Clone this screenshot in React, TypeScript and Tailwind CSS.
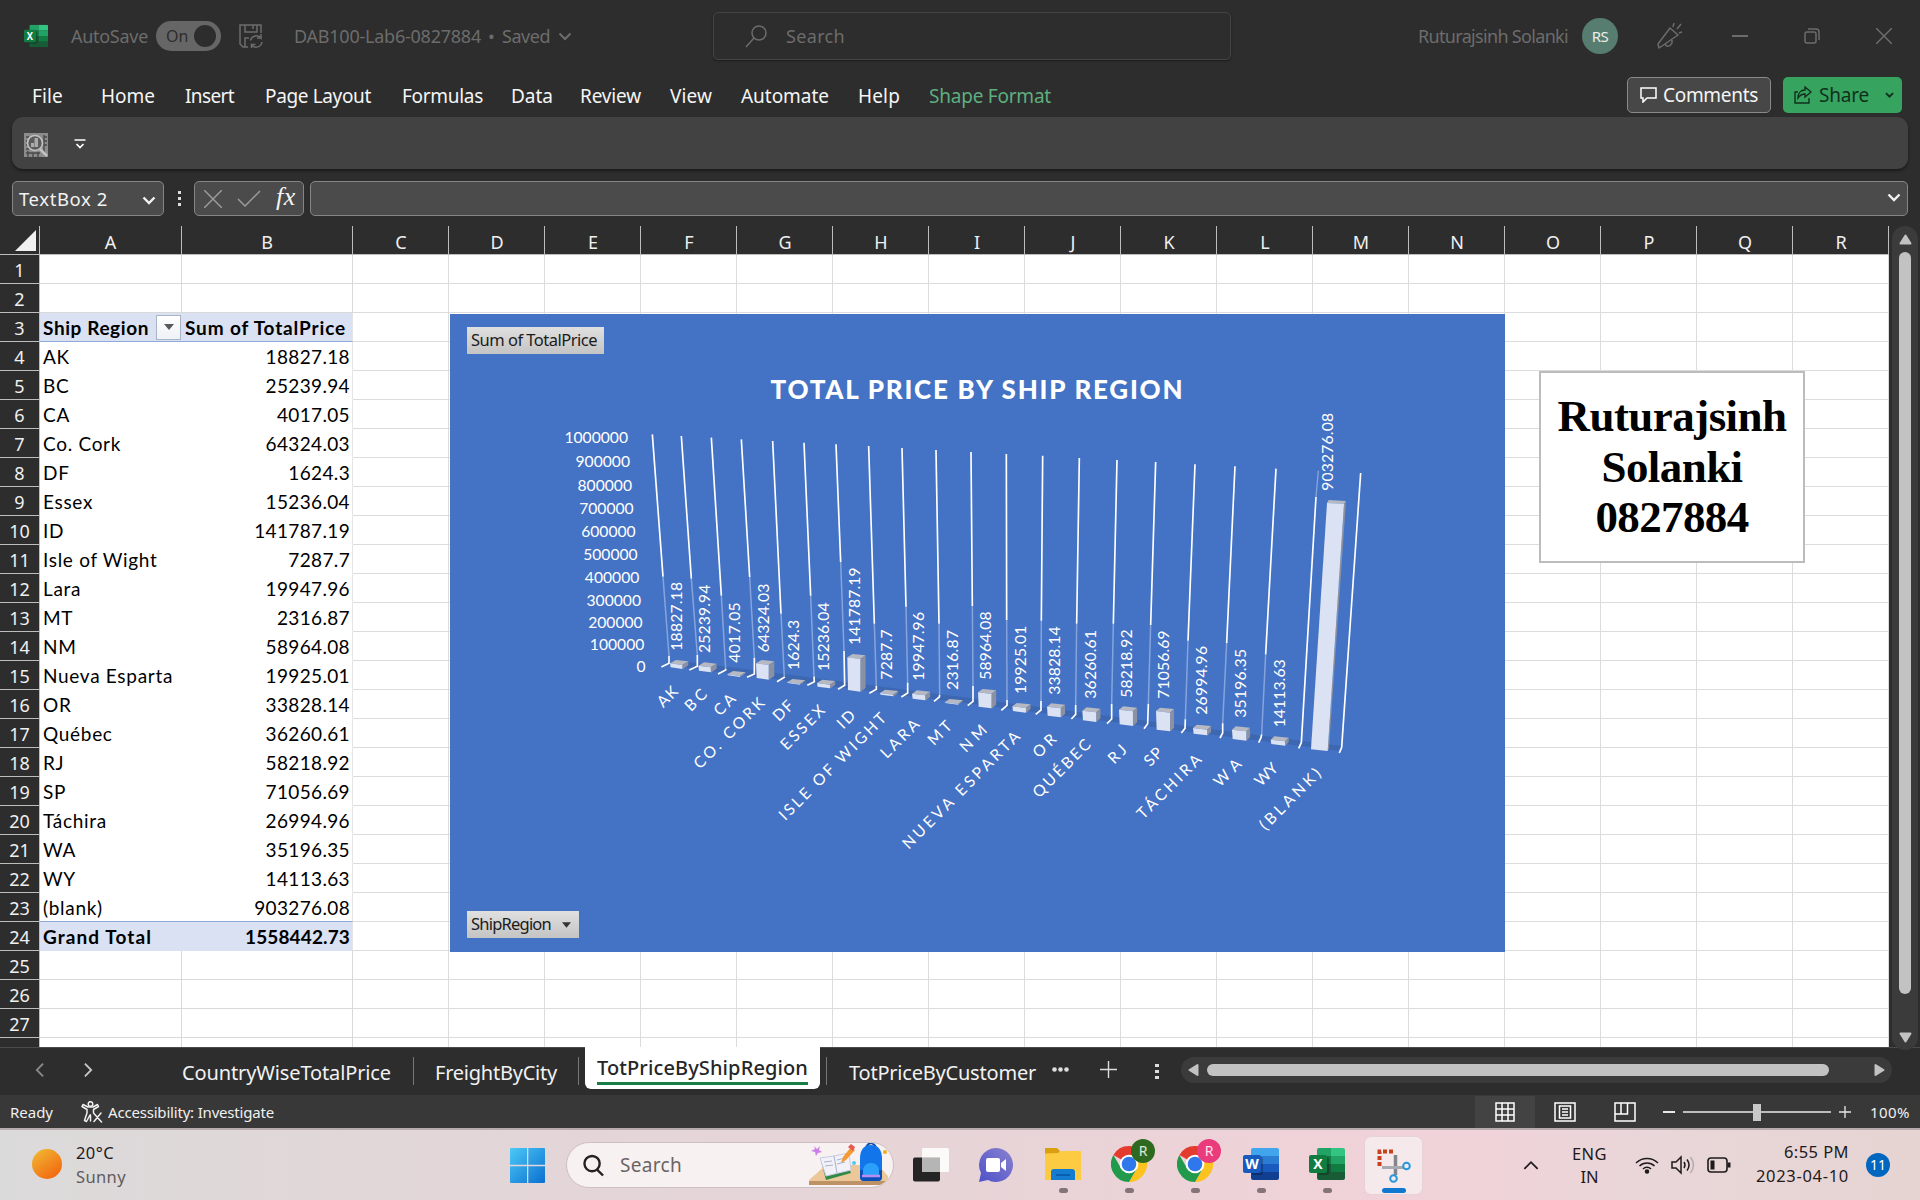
import { useLayoutEffect, useRef, useState } from 'react';
import type { ReactNode } from 'react';

/* A run of text spaced out so that it fills the width of its own box. */
function Fit({ children, className = '' }: { children: string; className?: string }) {
  const box = useRef<HTMLSpanElement>(null);
  const inner = useRef<HTMLSpanElement>(null);
  const [spacing, setSpacing] = useState(0);
  useLayoutEffect(() => {
    if (!box.current || !inner.current) return;
    const target = box.current.clientWidth;
    const natural = inner.current.getBoundingClientRect().width;
    setSpacing((target - natural) / children.length);
  }, [children]);
  return (
    <span ref={box} className={`inline-block shrink-0 whitespace-nowrap ${className}`}>
      <span ref={inner} className="inline-block" style={{ letterSpacing: spacing }}>
        {children}
      </span>
    </span>
  );
}

function Chevron({ className, d = 'M1.5 1.5 7 7l5.5-5.5', w = 2 }: { className: string; d?: string; w?: number }) {
  return (
    <svg viewBox="0 0 14 9" className={className} fill="none" stroke="currentColor" strokeWidth={w}>
      <path d={d} />
    </svg>
  );
}

function OfficeLogo({ className, kind }: { className: string; kind: 'X' | 'W' }) {
  const c =
    kind === 'X'
      ? ['#21a366', '#33c481', '#107c41', '#21a366', '#185c37', '#107c41', '#185c37', '#185c37']
      : ['#41a5ee', '#41a5ee', '#2b7cd3', '#2b7cd3', '#185abd', '#185abd', '#103f91', '#103f91'];
  return (
    <svg viewBox="0 0 36 34" className={className} preserveAspectRatio="none">
      <clipPath id={`sheet${kind}`}>
        <rect x="8" y="1" width="28" height="32" rx="2" />
      </clipPath>
      <g clipPath={`url(#sheet${kind})`}>
        {c.map((fill, i) => (
          <rect key={i} x={i % 2 ? 22 : 8} y={1 + Math.floor(i / 2) * 8} width="14.2" height="8.2" fill={fill} />
        ))}
      </g>
      <rect x="9" y="10" width="11" height="18" rx="2" fill="#000" opacity=".25" />
      <rect x="0" y="8" width="18" height="18" rx="2" fill={kind === 'X' ? '#107c41' : '#185abd'} />
      <text x="9" y="22" textAnchor="middle" fontSize="14" fontWeight="700" fontFamily="Open Sans, sans-serif" fill="#fff">
        {kind}
      </text>
    </svg>
  );
}

function TitleBar() {
  return (
    <div className="flex h-[72px] items-center pl-6 text-[18px] text-[#6c6c6c]">
      <OfficeLogo kind="X" className="h-6 w-6 shrink-0" />
      <Fit className="ml-[23px] w-[77px]">AutoSave</Fit>
      <div className="ml-[8px] flex h-[30px] w-[65px] shrink-0 items-center justify-between rounded-full bg-[#666] pl-[10px] pr-[5px]">
        <span className="text-[16px] text-[#2d2d2d]">On</span>
        <span className="h-[22px] w-[22px] rounded-full bg-[#2d2d2d]" />
      </div>
      <svg viewBox="0 0 24 24" className="ml-[18px] h-6 w-6 shrink-0" fill="none" stroke="#6c6c6c" strokeWidth="1.5">
        <path d="M22 9V1H1v19l3 3h5M6 1v7h12V1M14 1v4M6 23V14h4" />
        <path d="M11.500 16.500a6 6 0 0 1 10.500-2.500v-4M22 14h-4M23 18a6 6 0 0 1-10.500 3v3M12.500 20.500h4" />
      </svg>
      <Fit className="ml-[31px] w-[187px]">DAB100-Lab6-0827884</Fit>
      <span className="ml-[7px] w-[8px] shrink-0">•</span>
      <Fit className="ml-[6px] w-[48px]">Saved</Fit>
      <Chevron className="ml-[8px] h-[9px] w-[14px] shrink-0" />
      <div className="ml-[141px] flex h-12 w-[518px] shrink-0 items-center rounded-[5px] border border-[#454545] shadow-[0_1px_2px_#1c1c1c]">
        <svg viewBox="0 0 22 23" className="ml-[31px] h-[23px] w-[22px]" fill="none" stroke="#6c6c6c" strokeWidth="1.500">
          <circle cx="14" cy="8" r="7" />
          <path d="M9 13 1 22" />
        </svg>
        <Fit className="ml-[19px] w-[59px]">Search</Fit>
      </div>
      <Fit className="ml-[187px] w-[150px]">Ruturajsinh Solanki</Fit>
      <span className="ml-[14px] flex h-9 w-9 shrink-0 items-center justify-center rounded-full bg-[#577d70] text-[15px] tracking-[-0.500px] text-[#e6eeea]">RS</span>
      <svg viewBox="0 0 26 26" className="ml-[39px] h-[26px] w-[26px] shrink-0" fill="none" stroke="#6c6c6c" strokeWidth="1.500" strokeLinejoin="round">
        <path d="M13 5 21 12 5 23 2 25 1 21ZM8 21c1 3 5 3 7-1l0-3M16 4l1-4M20 6l4-5M22 10l3-1" />
      </svg>
      <span className="ml-[49px] h-[1.500px] w-4 shrink-0 bg-[#6c6c6c]" />
      <svg viewBox="0 0 16 16" className="ml-[56px] h-4 w-4 shrink-0" fill="none" stroke="#6c6c6c" strokeWidth="1.500">
        <rect x="1" y="4" width="11" height="11" rx="2" />
        <path d="M4 1h8a3 3 0 0 1 3 3v8" />
      </svg>
      <svg viewBox="0 0 16 16" className="ml-[56px] h-4 w-4 shrink-0" stroke="#6c6c6c" strokeWidth="1.500">
        <path d="M0 0 16 16M16 0 0 16" />
      </svg>
    </div>
  );
}

function MenuBar() {
  return (
    <div className="flex h-[45px] items-center pl-8 text-[19px] text-[#f5f5f5]">
      <div className="flex pt-[3px]">
        <Fit className="w-[31px]">File</Fit>
        <Fit className="ml-[38px] w-[54px]">Home</Fit>
        <Fit className="ml-[30px] w-[49px]">Insert</Fit>
        <Fit className="ml-[31px] w-[106px]">Page Layout</Fit>
        <Fit className="ml-[31px] w-[81px]">Formulas</Fit>
        <Fit className="ml-[28px] w-[42px]">Data</Fit>
        <Fit className="ml-[27px] w-[61px]">Review</Fit>
        <Fit className="ml-[29px] w-[42px]">View</Fit>
        <Fit className="ml-[29px] w-[88px]">Automate</Fit>
        <Fit className="ml-[29px] w-[42px]">Help</Fit>
        <Fit className="ml-[29px] w-[122px] text-[#5fae7f]">Shape Format</Fit>
      </div>
      <div className="ml-[576px] flex h-9 w-36 shrink-0 items-center rounded-[5px] border border-[#8a8a8a] bg-[#474747]">
        <svg viewBox="0 0 17 16" className="ml-3 h-4 w-[17px]" fill="none" stroke="#fff" strokeWidth="1.500">
          <path d="M1 1h15v10H7l-4 4v-4H1Z" />
        </svg>
        <Fit className="ml-[6px] mt-px w-[95px]">Comments</Fit>
      </div>
      <div className="ml-3 flex h-9 w-[119px] shrink-0 items-center rounded-[5px] bg-[#36a35f] text-[#10301c]">
        <svg viewBox="0 0 18 18" className="ml-[11px] h-[18px] w-[18px]" fill="none" stroke="currentColor" strokeWidth="1.400">
          <path d="M4 6H1v11h14v-5M11 1l6 5-6 5V8C8 8 6 9 4 12c0-5 3-8 7-8Z" />
        </svg>
        <Fit className="ml-[7px] mt-px w-[50px]">Share</Fit>
        <Chevron className="ml-[16px] h-[6px] w-[9px]" w={3} />
      </div>
    </div>
  );
}

function Ribbon() {
  return (
    <div className="mx-3 flex h-[52px] items-center rounded-[11px] bg-[#424242] pl-3 pt-[3px] shadow-[0_2px_3px_#1b1b1b]">
      <svg viewBox="0 0 24 24" className="h-6 w-6" fill="none" stroke="#a9a9a9">
        <rect x="0" y="0" width="24" height="24" fill="#8b8b8b" stroke="none" />
        <path d="M2 4h3M2 8h2M2 12h2M2 16h3M2 20h14M20 4h3M20 8h3M20 12h3M4 18v6M9 20v4M14 19v5M20 2v18" stroke="#4a4a4a" strokeWidth="1.400" />
        <circle cx="11" cy="10" r="7.500" fill="#5b5b5b" stroke="#c2c2c2" strokeWidth="1.600" />
        <path d="M7 10h3v4H7ZM10.500 5H14v9h-3.500Z" fill="#aaa" stroke="none" />
        <path d="m16 16 7 7" stroke="#c2c2c2" strokeWidth="2.500" />
      </svg>
      <svg viewBox="0 0 12 10" className="-mt-[2px] ml-[26px] h-[10px] w-3" fill="none" stroke="#fff" strokeWidth="1.700">
        <path d="M0.500 1h11M2.500 5 6 8.500 9.500 5" />
      </svg>
    </div>
  );
}

function FormulaBar() {
  return (
    <div className="mt-3 flex h-[35px] items-center px-3 text-[18.500px] text-[#f2f2f2]">
      <div className="flex h-[35px] w-[152px] items-center rounded-[5px] border border-[#858585] bg-[#4b4b4b] pl-[6px]">
        <Fit className="w-[89px]">TextBox 2</Fit>
        <Chevron className="ml-[34px] mt-[3px] h-[9px] w-[14px]" w={2.4} />
      </div>
      <div className="ml-[13px] flex w-[4px] flex-col items-center gap-[3px]">
        <span className="h-[3px] w-[3px] bg-[#ddd]" />
        <span className="h-[3px] w-[3px] bg-[#ddd]" />
        <span className="h-[3px] w-[3px] bg-[#ddd]" />
      </div>
      <div className="ml-[13px] flex h-[35px] w-[110px] items-center rounded-[5px] border border-[#858585] bg-[#4b4b4b]">
        <svg viewBox="0 0 18 18" className="ml-[9px] h-[18px] w-[18px]" stroke="#9a9a9a" strokeWidth="1.500">
          <path d="m0 0 18 18M18 0 0 18" />
        </svg>
        <svg viewBox="0 0 24 17" className="ml-[15px] h-[17px] w-6" fill="none" stroke="#9a9a9a" strokeWidth="1.500">
          <path d="m1 9 7 7L23 1" />
        </svg>
        <span className="-mt-[3px] ml-[15px] font-['Liberation_Serif',serif] text-[26px] italic leading-none tracking-[0.500px]">fx</span>
      </div>
      <div className="ml-[6px] flex h-[35px] flex-1 items-center justify-end rounded-[5px] border border-[#858585] bg-[#4b4b4b] pr-[6px]">
        <Chevron className="-mt-[2px] h-[9px] w-[14px]" w={2.4} />
      </div>
    </div>
  );
}

const pivot: [string, string][] = [
  ['AK', '18827.18'], ['BC', '25239.94'], ['CA', '4017.05'], ['Co. Cork', '64324.03'], ['DF', '1624.3'],
  ['Essex', '15236.04'], ['ID', '141787.19'], ['Isle of Wight', '7287.7'], ['Lara', '19947.96'], ['MT', '2316.87'],
  ['NM', '58964.08'], ['Nueva Esparta', '19925.01'], ['OR', '33828.14'], ['Québec', '36260.61'], ['RJ', '58218.92'],
  ['SP', '71056.69'], ['Táchira', '26994.96'], ['WA', '35196.35'], ['WY', '14113.63'], ['(blank)', '903276.08'],
];
const letters = 'CDEFGHIJKLMNOPQR'.split('');

function Row({ n }: { n: number }) {
  const inPivot = n >= 3 && n <= 24;
  const head = n === 3;
  const total = n === 24;
  let a: ReactNode = null;
  let b: ReactNode = null;
  if (head) {
    a = (
      <>
        <Fit className="w-[106px]">Ship Region</Fit>
        <span className="-mt-[2px] ml-[7px] flex h-[25px] w-[25px] shrink-0 items-center justify-center border border-[#a9b4c6] bg-gradient-to-b from-white to-[#eef1f6]">
          <svg viewBox="0 0 10 6" className="h-[6px] w-[10px]"><path d="M0 0h10L5 6Z" fill="#595959" /></svg>
        </span>
      </>
    );
    b = <Fit className="mr-auto w-[161px]">Sum of TotalPrice</Fit>;
  } else if (total) {
    a = <Fit className="w-[109px]">Grand Total</Fit>;
    b = <Fit className="w-[105px]">1558442.73</Fit>;
  } else if (inPivot) {
    a = pivot[n - 4][0];
    b = pivot[n - 4][1];
  }
  const tone = head || total ? 'bg-[#d9e1f2] font-bold' : 'bg-white';
  const line = !inPivot
    ? 'border-b border-r border-[#d9d9d9]'
    : head || n === 23
      ? 'border-b border-b-[#8ea9db]'
      : 'border-b border-b-transparent';
  return (
    <div className="flex h-[29px] shrink-0 bg-white font-[Lato,sans-serif] text-[19px] text-black">
      <div className="flex w-10 shrink-0 items-center justify-center border-b border-r border-[#bdbdbd] bg-[#2d2d2d] pt-[2px] font-['Noto_Sans',sans-serif] text-[18px] text-[#f0f0f0]">{n}</div>
      <div className={`flex w-[142px] shrink-0 items-center whitespace-nowrap pl-[3px] pt-[2px] tracking-[0.700px] ${tone} ${line}`}>{a}</div>
      <div className={`flex w-[171px] shrink-0 items-center justify-end whitespace-nowrap pl-[3px] pt-[2px] tracking-[0.350px] ${head ? 'pr-0' : 'pr-[2px]'} ${tone} ${line} ${inPivot ? 'border-r border-r-[#e4e4e4]' : ''}`}>{b}</div>
      {letters.map((l) => (
        <div key={l} className="w-24 shrink-0 border-b border-r border-[#dcdcdc]" />
      ))}
    </div>
  );
}

/* Gridlines: wall top, end of bright part, start of lower bright part, floor corner, floor front. */
const grid: number[][] = [
  [337, 103, 369, 530, 387, 768, 387, 790, 364, 801], [424, 108, 454, 536, 472, 765, 472, 799, 448, 810],
  [514, 113, 544, 587, 557, 806, 557, 810, 534, 822], [604, 118, 629, 531, 643, 773, 643, 822, 621, 832],
  [698, 123, 723, 641, 733, 830, 733, 832, 711, 845], [792, 128, 812, 587, 822, 830, 823, 845, 802, 856],
  [888, 133, 902, 486, 912, 753, 914, 856, 894, 868], [986, 138, 1003, 671, 1009, 858, 1009, 868, 988, 880],
  [1086, 144, 1098, 620, 1103, 848, 1103, 879, 1084, 891], [1188, 150, 1197, 671, 1199, 885, 1198, 891, 1182, 904],
  [1293, 156, 1297, 618, 1299, 858, 1299, 904, 1283, 917], [1399, 162, 1400, 660, 1401, 900, 1401, 916, 1384, 931],
  [1508, 167, 1504, 662, 1503, 903, 1503, 930, 1487, 943], [1618, 174, 1610, 671, 1607, 915, 1607, 943, 1594, 957],
  [1731, 180, 1720, 671, 1715, 912, 1715, 957, 1701, 971], [1847, 186, 1832, 675, 1825, 912, 1823, 971, 1812, 986],
  [1965, 193, 1944, 722, 1936, 958, 1935, 985, 1924, 999], [2085, 199, 2060, 729, 2048, 970, 2048, 999, 2040, 1014],
  [2208, 206, 2177, 763, 2165, 1003, 2163, 1013, 2156, 1028], [2328, 291, 2284, 1028, 2284, 1028, 2284, 1028, 2276, 1045],
  [2462, 219, 2405, 1042, 2405, 1042, 2405, 1042, 2398, 1059],
];
/* Columns: left, top, height. */
const bars: number[][] = [
  [390, 790, 12], [475, 797, 15], [562, 823, 3], [648, 790, 44], [741, 847, 2], [831, 849, 11], [922, 772, 98],
  [1020, 879, 5], [1116, 881, 15], [1214, 907, 2], [1314, 877, 43], [1417, 919, 14], [1521, 920, 27], [1627, 932, 29],
  [1737, 929, 44], [1848, 933, 56], [1959, 984, 17], [2076, 989, 28], [2192, 1019, 13],
];
/* Value labels: centre, bottom, top. */
const values: number[][] = [
  [410, 750, 548], [495, 757, 556], [583, 786, 609], [670, 755, 553], [762, 808, 662], [852, 811, 609], [944, 733, 504],
  [1041, 837, 690], [1137, 840, 638], [1237, 868, 692], [1337, 837, 636], [1441, 880, 679], [1545, 882, 681],
  [1651, 894, 692], [1760, 891, 690], [1872, 894, 693], [1984, 942, 740], [2101, 951, 749], [2219, 980, 780], [2363, 270, 41],
];
/* Category labels: right, top, left. */
const cats: number[][] = [
  [413, 862, 350], [500, 870, 433], [586, 884, 520], [676, 893, 460], [760, 904, 697], [857, 916, 720], [945, 934, 890],
  [1042, 938, 716], [1140, 958, 1020], [1235, 966, 1162], [1340, 978, 1258], [1443, 993, 1086], [1548, 1005, 1477],
  [1655, 1018, 1477], [1760, 1037, 1703], [1867, 1046, 1811], [1987, 1063, 1790], [2103, 1080, 2020], [2213, 1092, 2143],
  [2345, 1105, 2157],
];
const axis: [string, number, number][] = [
  ['1000000', 263, 112], ['900000', 269, 185], ['800000', 275, 256], ['700000', 280, 325], ['600000', 286, 395],
  ['500000', 292, 463], ['400000', 297, 532], ['300000', 302, 602], ['200000', 307, 667], ['100000', 312, 733], ['0', 316, 800],
];

function PivotChart() {
  return (
    <div className="absolute left-[450px] top-[88px] h-[638px] w-[1055px] bg-[#4472c4]">
      <svg viewBox="450 314 1055 638" className="block h-[638px] w-[1055px]" fontFamily="Lato, sans-serif" fill="#fff">
        <text x="770.500" y="398.500" fontSize="26" fontWeight="900" textLength="412">TOTAL PRICE BY SHIP REGION</text>
        <g transform="translate(540 400) scale(.333333)" fontSize="48">
          <path d="M440 785 2405 1038 2395 1052 440 803Z" fill="#3d67b1" />
          {grid.map((g, i) => (
            <g key={i} fill="none" stroke="#fff" strokeWidth="5">
              <path d={`M${g[2]} ${g[3]}L${g[4]} ${g[5]}`} stroke="#86a4dc" strokeWidth="4.500" />
              {i === 19 && <path d="M2335 212 2328 291" stroke="#86a4dc" strokeWidth="4" />}
              <path d={`M${g[0]} ${g[1]}L${g[2]} ${g[3]}M${g[4]} ${g[5]}L${g[6]} ${g[7]} ${g[8]} ${g[9]}`} />
            </g>
          ))}
          {bars.map(([x, y, h], i) => {
            const w = 37 + i * 0.35;
            const dx = 18 - i * 0.4;
            return (
              <g key={i}>
                <path d={`M${x} ${y}l${dx} -10 ${w} 4 ${-dx} 11Z`} fill="#b6b9c1" />
                <path d={`M${x + w} ${y + 5}l${dx} -11v${h}l${-dx} 12Z`} fill="#8b91a0" />
                <path d={`M${x} ${y}l${w} 5v${h}l${-w + 2} -5Z`} fill="#dae2f3" />
              </g>
            );
          })}
          <path d="M2361 309 2366 300 2418 303 2412 311Z" fill="#b6b9c1" />
          <path d="M2412 311 2418 303 2367 1045 2363 1053Z" fill="#8b91a0" />
          <path d="M2361 309 2412 311 2363 1053 2313 1048Z" fill="#dae2f3" />
          {values.map(([x, y, top], i) => (
            <text key={i} transform={`translate(${x + 16} ${y + 2}) rotate(-90)`} fontSize="47" textLength={y - top + 4}>
              {pivot[i][1]}
            </text>
          ))}
          {cats.map(([r, t, l], i) => {
            const name = pivot[i][0].toUpperCase();
            const run = r - l - 25;
            const len = run / 0.7071 + 6 + 14 / name.length;
            return (
              <text key={i} transform={`translate(${l + 20} ${t + 25 + run}) rotate(-45)`} textLength={len} fontSize="47">
                {name}
              </text>
            );
          })}
          {axis.map(([t, r, y]) => (
            <text key={t} x={r + 1} y={y + 17} textAnchor="end" fontSize="47">{t}</text>
          ))}
        </g>
      </svg>
      <div className="absolute left-[17px] top-[13px] flex h-[27px] w-[137px] items-center bg-gradient-to-b from-[#e0e0e0] to-[#c4c4c4] pl-[4px] font-['Noto_Sans',sans-serif] text-[16.500px] text-[#1b1b1b]">
        <Fit className="w-[126px]">Sum of TotalPrice</Fit>
      </div>
      <div className="absolute left-[17px] top-[597px] flex h-[27px] w-[112px] items-center bg-gradient-to-b from-[#e0e0e0] to-[#c4c4c4] pl-[4px] font-['Noto_Sans',sans-serif] text-[16.500px] text-[#1b1b1b]">
        <Fit className="w-[80px]">ShipRegion</Fit>
        <svg viewBox="0 0 10 6" className="ml-[11px] h-[6px] w-[9px]"><path d="M0 0h10L5 6Z" fill="#333" /></svg>
      </div>
    </div>
  );
}

function Sheet() {
  const rows = Array.from({ length: 28 }, (_, i) => i + 1);
  return (
    <div className="mt-[10px] flex h-[821px]">
      <div className="relative flex h-[821px] w-[1889px] flex-col overflow-hidden">
        <div className="flex h-[29px] shrink-0 text-[18px] text-[#f0f0f0]">
          <div className="flex w-10 shrink-0 items-end justify-end border-b border-r border-[#bdbdbd] pb-[3px] pr-[3px]">
            <svg viewBox="0 0 21 21" className="h-[21px] w-[21px]"><path d="M21 0v21H0Z" fill="#f0f0f0" /></svg>
          </div>
          <div className="flex w-[142px] shrink-0 items-center justify-center border-b border-r border-[#bdbdbd] pt-[4px]">A</div>
          <div className="flex w-[171px] shrink-0 items-center justify-center border-b border-r border-[#bdbdbd] pt-[4px]">B</div>
          {letters.map((l) => (
            <div key={l} className="flex w-24 shrink-0 items-center justify-center border-b border-r border-[#bdbdbd] pl-px pt-[4px]">{l}</div>
          ))}
        </div>
        {rows.map((n) => (
          <Row key={n} n={n} />
        ))}
        <PivotChart />
        <div className="absolute left-[1539px] top-[145px] flex h-[192px] w-[266px] flex-col items-center justify-center border-2 border-[#bcbcbc] bg-white font-['Liberation_Serif',serif] text-[45px] font-bold leading-[50.500px] text-black">
          <Fit className="w-[229px]">Ruturajsinh</Fit>
          <Fit className="w-[141px]">Solanki</Fit>
          <Fit className="w-[153px]">0827884</Fit>
        </div>
      </div>
      <div className="relative z-10 ml-[3px] flex h-[824px] w-[26px] shrink-0 flex-col items-center rounded-full bg-[#3b3b3b]">
        <svg viewBox="0 0 13 11" className="mt-2 h-[11px] w-[13px]"><path d="M6.500 1.500 11.500 9.500h-10Z" fill="#c2c2c2" stroke="#c2c2c2" strokeWidth="2" strokeLinejoin="round" /></svg>
        <div className="mt-[7px] h-[742px] w-3 rounded-full bg-[#c2c2c2]" />
        <svg viewBox="0 0 13 11" className="mb-[7px] mt-auto h-[11px] w-[13px]"><path d="M6.500 9.500 11.500 1.500h-10Z" fill="#c2c2c2" stroke="#c2c2c2" strokeWidth="2" strokeLinejoin="round" /></svg>
      </div>
    </div>
  );
}

function SheetTabs() {
  return (
    <div className="flex h-12 items-start border-t border-[#4a4a4a] bg-[#2d2d2d] text-[20px] text-[#f2f2f2]">
      <svg viewBox="0 0 10 16" className="ml-[35px] mt-[14px] h-4 w-[9px]" fill="none" stroke="#8a8a8a" strokeWidth="2"><path d="M9 1 2 8l7 7" /></svg>
      <svg viewBox="0 0 10 16" className="ml-[40px] mt-[14px] h-4 w-[9px]" fill="none" stroke="#c8c8c8" strokeWidth="2"><path d="m1 1 7 7-7 7" /></svg>
      <Fit className="ml-[89px] mt-[10px] w-[209px]">CountryWiseTotalPrice</Fit>
      <span className="ml-[22px] mt-[9px] h-[28px] w-px shrink-0 bg-[#777]" />
      <Fit className="ml-[21px] mt-[10px] w-[122px]">FreightByCity</Fit>
      <span className="ml-[21px] mt-[9px] h-[28px] w-px shrink-0 bg-[#777]" />
      <div className="-mt-px ml-[6px] flex h-[42px] w-[235px] shrink-0 flex-col items-center rounded-b-[6px] bg-white text-[#262626]">
        <div className="mt-[4px] flex h-[34px] border-b-[3px] border-[#1a7c45]">
          <Fit className="w-[211px] font-medium leading-[33px]">TotPriceByShipRegion</Fit>
        </div>
      </div>
      <span className="ml-[6px] mt-[9px] h-[28px] w-px shrink-0 bg-[#777]" />
      <Fit className="ml-[22px] mt-[10px] w-[187px]">TotPriceByCustomer</Fit>
      <svg viewBox="0 0 17 5" className="ml-[16px] mt-[19px] h-[5px] w-[17px]" fill="#ddd"><circle cx="2.500" cy="2.500" r="2.300" /><circle cx="8.500" cy="2.500" r="2.300" /><circle cx="14.500" cy="2.500" r="2.300" /></svg>
      <svg viewBox="0 0 17 17" className="ml-[31px] mt-[13px] h-[17px] w-[17px]" stroke="#ddd" strokeWidth="1.400"><path d="M8.500 0v17M0 8.500h17" /></svg>
      <div className="ml-[38px] mt-[16px] flex w-[4px] flex-col gap-[3px]">
        <span className="h-[3px] w-[4px] bg-[#ddd]" />
        <span className="h-[3px] w-[4px] bg-[#ddd]" />
        <span className="h-[3px] w-[4px] bg-[#ddd]" />
      </div>
      <div className="ml-[22px] mt-[9px] flex h-[26px] w-[711px] shrink-0 items-center rounded-full bg-[#3b3b3b]">
        <svg viewBox="0 0 11 13" className="ml-[7px] h-[14px] w-[11px]"><path d="M1.500 6.500 9.500 1.500v10Z" fill="#c2c2c2" stroke="#c2c2c2" strokeWidth="2" strokeLinejoin="round" /></svg>
        <div className="ml-[8px] h-3 w-[622px] rounded-full bg-[#c2c2c2]" />
        <svg viewBox="0 0 11 13" className="ml-[45px] h-[14px] w-[11px]"><path d="M9.500 6.500 1.500 1.500v10Z" fill="#c2c2c2" stroke="#c2c2c2" strokeWidth="2" strokeLinejoin="round" /></svg>
      </div>
    </div>
  );
}

function StatusBar() {
  return (
    <div className="flex h-[33px] items-center bg-[#383838] pl-[10px] pt-px text-[15px] text-[#f0f0f0]">
      <Fit className="w-[43px]">Ready</Fit>
      <svg viewBox="0 0 22 22" className="ml-[28px] h-[22px] w-[22px]" fill="none" stroke="#f0f0f0" strokeWidth="1.500" strokeLinejoin="round" strokeLinecap="round">
        <circle cx="9.500" cy="3" r="2.300" />
        <path d="M12 6h-5L2 3.500 1 5.500 6 8.500V12L3.500 19.500 5.500 20.500 9 14M12.500 8.500l5-3-1-2-4.500 2.500M12.500 8.500V12l8 9M20 12l-7 8.500M9.500 14v6" />
      </svg>
      <Fit className="ml-[5px] w-[166px]">Accessibility: Investigate</Fit>
      <div className="ml-auto flex h-8 w-[60px] items-center justify-center bg-[#434343] pb-px pr-px">
        <svg viewBox="0 0 20 20" className="h-5 w-5" fill="none" stroke="#fff" strokeWidth="1.500"><path d="M1 1h18v18H1ZM7 1v18M13 1v18M1 7h18M1 13h18" /></svg>
      </div>
      <svg viewBox="0 0 22 20" className="-mt-px ml-[19px] h-5 w-[22px]" fill="none" stroke="#fff" strokeWidth="1.500"><path d="M1 1h20v18H1ZM5.500 4h11v12h-11ZM8 7h6M8 10h6M8 13h6" /></svg>
      <svg viewBox="0 0 22 20" className="-mt-px ml-[38px] h-5 w-[22px]" fill="none" stroke="#fff" strokeWidth="1.500"><path d="M1 1h20v18H1ZM1 12h12.500V1M7 1v11" /></svg>
      <span className="ml-[27px] h-[1.500px] w-3 bg-[#e8e8e8]" />
      <div className="ml-[8px] flex h-[17px] w-[148px] items-center">
        <span className="h-[2px] w-[70px] bg-[#bdbdbd]" />
        <span className="h-[17px] w-2 bg-[#c8c8c8]" />
        <span className="h-[2px] w-[70px] bg-[#bdbdbd]" />
      </div>
      <svg viewBox="0 0 12 12" className="ml-[8px] h-3 w-3" stroke="#e8e8e8" strokeWidth="1.300"><path d="M6 0v12M0 6h12" /></svg>
      <Fit className="ml-[19px] mr-[10px] w-[40px]">100%</Fit>
    </div>
  );
}

function ChromeIcon({ badge }: { badge: string }) {
  return (
    <div className="relative h-[36px] w-9">
      <svg viewBox="0 0 36 36" className="h-9 w-9">
        <path d="M18 18 2.410 9A18 18 0 0 1 33.590 9H18Z" fill="#e33b2e" />
        <path d="M18 18 33.590 9A18 18 0 0 1 18 36l7.800-13.500Z" fill="#fcc31e" />
        <path d="M25.800 22.500 18 36A18 18 0 0 1 2.410 9l7.800 13.500Z" fill="#219a4b" />
        <circle cx="18" cy="18" r="9.300" fill="#fff" />
        <circle cx="18" cy="18" r="7.300" fill="#2f78ec" />
      </svg>
      <span className={`absolute -top-[7px] left-[20px] flex h-6 w-6 items-center justify-center rounded-full text-[14px] text-white/85 ${badge}`}>R</span>
    </div>
  );
}

function TaskApp({ children, bar = 'dot', className }: { children: ReactNode; bar?: 'dot' | 'active'; className: string }) {
  return (
    <div className={`flex h-[57px] shrink-0 flex-col items-center ${className}`}>
      <div className="flex h-[54px] items-center">{children}</div>
      {bar === 'dot' && <span className="-mt-[3px] h-[5px] w-[9px] shrink-0 rounded-full bg-[#857477]" />}
      {bar === 'active' && <span className="-mt-[3px] h-[5px] w-6 shrink-0 rounded-full bg-[#0f78d0]" />}
    </div>
  );
}

function Taskbar() {
  return (
    <div className="flex h-[72px] items-center border-t-2 border-[#b7abad] bg-[linear-gradient(90deg,#dbdada_0%,#e2d6d8_22%,#e7d4d7_50%,#f0d2d8_72%,#f0d3d9_77%,#e9d6d8_86%,#e6d4d3_100%)] text-[16.500px] text-[#1f1a1b]">
      <svg viewBox="0 0 30 30" className="-mt-[2px] ml-[32px] h-[30px] w-[30px] shrink-0">
        <linearGradient id="sun" x1="0" y1="0" x2=".7" y2="1"><stop stopColor="#f0bd35" /><stop offset="1" stopColor="#f2680f" /></linearGradient>
        <circle cx="15" cy="15" r="15" fill="url(#sun)" />
      </svg>
      <div className="-mt-px ml-[14px] flex w-[60px] shrink-0 flex-col leading-[24px]">
        <Fit className="w-[38px]">20°C</Fit>
        <Fit className="w-[50px] text-[#615b5d]">Sunny</Fit>
      </div>
      <svg viewBox="0 0 35 35" className="ml-[374px] h-[35px] w-[35px] shrink-0">
        <linearGradient id="win" x1="0" y1="0" x2="1" y2="1"><stop stopColor="#4cc9f8" /><stop offset="1" stopColor="#0a6fcf" /></linearGradient>
        <path d="M1 0h16v16.700H0V1a1 1 0 0 1 1-1ZM18.300 0H34a1 1 0 0 1 1 1v15.700H18.300ZM0 18.300h17V35H1a1 1 0 0 1-1-1ZM18.300 18.300H35V34a1 1 0 0 1-1 1H18.300Z" fill="url(#win)" />
      </svg>
      <div className="ml-[21px] flex h-[46px] w-[328px] shrink-0 items-center overflow-hidden rounded-full border border-[#cdbfc2] bg-[#f7f1f1]">
        <svg viewBox="0 0 22 23" className="ml-[16px] h-[23px] w-[22px]" fill="none" stroke="#252122" strokeWidth="2.500"><circle cx="9.500" cy="9.500" r="8" /><path d="m15 16 6 6" /></svg>
        <Fit className="ml-[16px] w-[62px] text-[19px] text-[#6a6465]">Search</Fit>
        <svg viewBox="0 0 84 44" className="ml-[127px] h-[44px] w-[84px] shrink-0">
          <path d="m0 37 17-15h52l10 11v6H0Z" fill="#ebc79a" /><path d="M0 38h77l-3 4H0Z" fill="#bd9365" />
          <path d="m12 18 24-4 6 16-25 7Z" fill="#2f8a48" /><path d="m11 15 14-2 15-3 2 17-25 6Z" fill="#f2f1f7" stroke="#c8cbe0" />
          <path d="m25 13 3 17M15 19l8-1M16 23l8-1M28 17l8-2M28 21l8-2" stroke="#a9b0cf" fill="none" />
          <path d="m32 20 2-6 8-10 4 3-9 10Z" fill="#f49a34" /><path d="m39 4 3-3 4 3-2 4Z" fill="#e45a50" />
          <path d="M5 3 8 6l3-3-1 4 3 2-4 1-2 3-1-4-4-1 4-2Z" fill="#cd7fe8" />
          <path d="M57 4q5-8 10 0" fill="none" stroke="#134da8" strokeWidth="2" />
          <path d="M51 14Q52 2 62 2T73 14V34q0 4-4 4H55q-4 0-4-4Z" fill="#1375ea" />
          <path d="M51 27h22v7q0 4-4 4H55q-4 0-4-4Z" fill="#0b4fb9" /><path d="M54 32Q53 20 62 20t8 12Z" fill="#2ba0fa" /><path d="M53 33h18" stroke="#b98cf2" strokeWidth="2.500" />
          <circle cx="76" cy="9" r="2" fill="#f3a91c" /><circle cx="45" cy="20" r="2" fill="#58c8ea" />
        </svg>
      </div>
      <svg viewBox="0 0 36 34" className="ml-[19px] h-[34px] w-[36px] shrink-0">
        <rect x="0" y="9.500" width="27" height="24" rx="2" fill="#242424" />
        <rect x="9" y="0" width="27" height="24" rx="1.500" fill="#fff" opacity=".85" />
        <path d="M9 9.500h18V24H9Z" fill="#b5b5b5" />
      </svg>
      <svg viewBox="0 0 34 34" className="ml-[30px] h-[34px] w-[34px] shrink-0">
        <linearGradient id="chat" x1="0" y1="1" x2="1" y2="0"><stop stopColor="#4d52c8" /><stop offset="1" stopColor="#8a82d0" /></linearGradient>
        <path d="M17 0a17 17 0 1 1-8 32L0 34l2-9A17 17 0 0 1 17 0Z" fill="url(#chat)" />
        <rect x="7" y="10" width="14" height="14" rx="2" fill="#fff" /><path d="m22 15 5-4v12l-5-4Z" fill="#fff" />
      </svg>
      <TaskApp className="ml-[32px] w-9">
        <svg viewBox="0 0 36 34" className="h-[34px] w-9">
          <path d="M0 1h12l3 3-3 5H0Z" fill="#dba012" /><path d="M0 6.500 13 6l3-2h19q1 0 1 1v28H0Z" fill="#fccb42" />
          <path d="M6 33V25q0-3 3-3h18q3 0 3 3v8Z" fill="#137bd0" /><path d="M11 28h14" stroke="#0a559c" strokeWidth="1.500" />
        </svg>
      </TaskApp>
      <TaskApp className="ml-[30px] w-9"><ChromeIcon badge="bg-[#2d6a1f]" /></TaskApp>
      <TaskApp className="ml-[30px] w-9"><ChromeIcon badge="bg-[#ea3b7c]" /></TaskApp>
      <TaskApp className="ml-[30px] w-9"><OfficeLogo kind="W" className="h-[34px] w-9" /></TaskApp>
      <TaskApp className="ml-[30px] w-9"><OfficeLogo kind="X" className="h-[34px] w-9" /></TaskApp>
      <TaskApp bar="active" className="ml-[20px] w-[57px] rounded-[6px] bg-[#f6e9ec] shadow-[0_0_1px_1px_#e6d3d7]">
        <svg viewBox="0 0 34 34" className="mt-1 h-[34px] w-[34px]" fill="none">
          <path d="M2.500 17V2.500H18" stroke="#c8411b" strokeWidth="4" strokeDasharray="4 2" />
          <path d="M18.500 6v20" stroke="#80868c" strokeWidth="3.500" /><path d="M5 18.500h22" stroke="#a6abb0" strokeWidth="3" />
          <circle cx="29.500" cy="17" r="3.300" stroke="#2398dd" strokeWidth="2" /><circle cx="16.500" cy="29.500" r="3.300" stroke="#2398dd" strokeWidth="2" />
        </svg>
      </TaskApp>
      <Chevron className="ml-auto h-[10px] w-[16px] shrink-0" d="M1 8 7 2l6 6" w={1.6} />
      <div className="-mt-px ml-[33px] flex w-[35px] shrink-0 flex-col items-center leading-[23px]">
        <Fit className="w-[35px]">ENG</Fit>
        <Fit className="w-[18px]">IN</Fit>
      </div>
      <svg viewBox="0 0 24 18" className="ml-[28px] h-[18px] w-6 shrink-0" fill="none" stroke="#1f1a1b" strokeWidth="1.500">
        <path d="M1 7a15.500 15.500 0 0 1 22 0M4.500 10a10.600 10.600 0 0 1 15 0M8 13a5.700 5.700 0 0 1 8 0" /><circle cx="12" cy="15.500" r="1.500" fill="#1f1a1b" />
      </svg>
      <svg viewBox="0 0 24 20" className="ml-[12px] h-5 w-6 shrink-0" fill="none" stroke="#1f1a1b" strokeWidth="1.500">
        <path d="M1 7h4l5-5v16l-5-5H1ZM13 7q2 3 0 6M16 4.500q4 5.500 0 11" /><path d="M19.500 2q6 8 0 16" stroke="#b9abae" />
      </svg>
      <svg viewBox="0 0 24 16" className="ml-[12px] h-4 w-6 shrink-0" fill="none" stroke="#1f1a1b" strokeWidth="1.600">
        <rect x="1" y="1" width="19" height="14" rx="3" /><path d="M3.500 3.500h4v9h-4Z" fill="#1f1a1b" stroke="none" /><path d="M22 5.500v5" strokeWidth="3" />
      </svg>
      <div className="-mt-[2px] ml-[25px] flex w-[93px] shrink-0 flex-col items-end leading-[24px]">
        <Fit className="w-[65px]">6:55 PM</Fit>
        <Fit className="w-[93px]">2023-04-10</Fit>
      </div>
      <span className="-mt-px ml-[17px] mr-[30px] flex h-6 w-6 shrink-0 items-center justify-center rounded-full bg-[#0067c0] text-[14px] text-white">11</span>
    </div>
  );
}

export default function App() {
  return (
    <div className="h-[1200px] w-[1920px] overflow-hidden bg-[#2d2d2d] font-['Noto_Sans',sans-serif]">
      <TitleBar />
      <MenuBar />
      <Ribbon />
      <FormulaBar />
      <Sheet />
      <SheetTabs />
      <StatusBar />
      <Taskbar />
    </div>
  );
}
